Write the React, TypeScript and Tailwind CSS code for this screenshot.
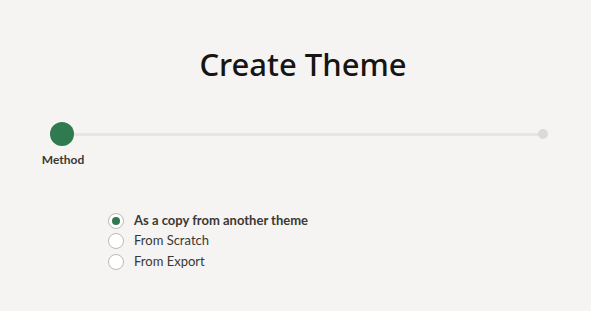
import { useState } from 'react';

const options = [
  { id: 'copy', label: 'As a copy from another theme' },
  { id: 'scratch', label: 'From Scratch' },
  { id: 'export', label: 'From Export' },
];

export default function App() {
  const [method, setMethod] = useState('copy');

  return (
    <div className="min-h-screen w-full bg-[#f5f4f2] font-['Noto_Sans',sans-serif] text-[#161513]">
      <h1 className="pt-[42px] pl-[15px] text-center text-[31px] leading-[44px] font-medium">Create Theme</h1>

      {/* Stepper */}
      <div className="mt-[36px] pl-[50px] pr-[43px]">
        <div className="flex items-center">
          <div className="w-6 h-6 rounded-full bg-[#2f7a4f] shrink-0" />
          <div className="flex-1 h-[3px] bg-[#e7e5e2]" />
          <div className="w-[10px] h-[10px] rounded-full bg-[#dcdad7] shrink-0" />
        </div>
        <div className="w-6 ml-px flex justify-center mt-[5px]">
          <span className="font-['Lato',sans-serif] text-[12px] font-bold text-[#3b3833] whitespace-nowrap">Method</span>
        </div>
      </div>

      {/* Options */}
      <div className="mt-[43px] pl-[108px] flex flex-col gap-[3.5px] font-['Lato',sans-serif]">
        {options.map(o => {
          const on = method === o.id;
          return (
            <label key={o.id} className="flex items-center gap-[10px] cursor-pointer h-[17px]" onClick={() => setMethod(o.id)}>
              <span className="w-4 h-4 rounded-full border border-[#bdbab5] bg-white flex items-center justify-center">
                {on && <span className="w-2 h-2 rounded-full bg-[#2f7a4f]" />}
              </span>
              <span className={`text-[13px] text-[#3b3833] ${on ? 'font-bold' : ''}`}>{o.label}</span>
            </label>
          );
        })}
      </div>
    </div>
  );
}
